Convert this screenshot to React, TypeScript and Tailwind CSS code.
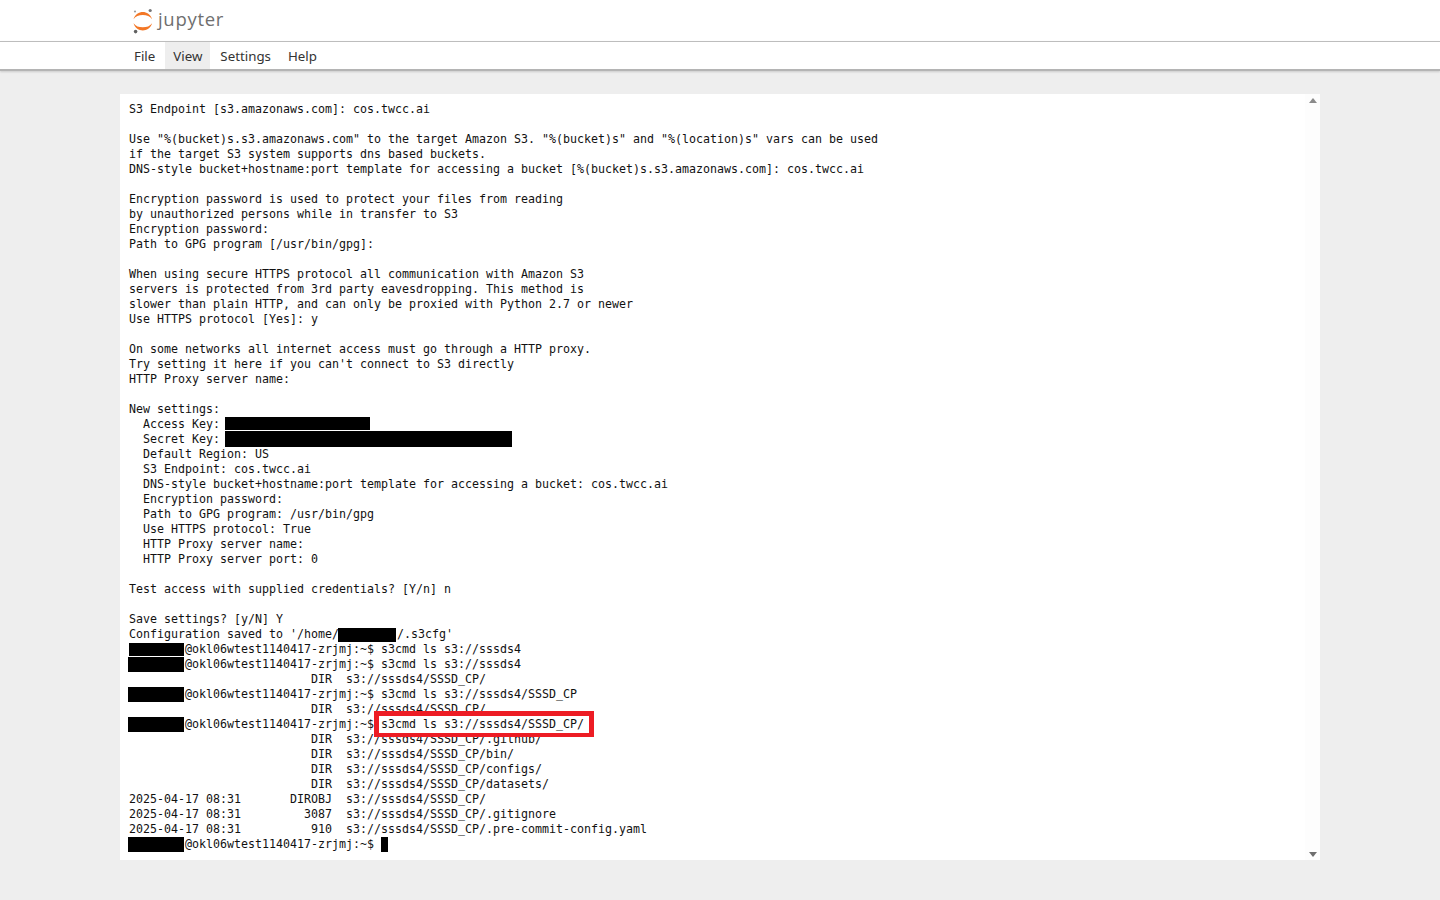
import type { ReactNode } from 'react'

function Tapa({ className }: { className: string }) {
  return <span className={`inline-block bg-black align-top ${className}`} />
}

const prompt = <Tapa className="-ml-[1px] mr-[1px] h-[15px] w-[56px]" />
const dir = (p: string) => ' '.repeat(26) + 'DIR  s3://sssds4/' + p

// cada línea del terminal: texto o fragmentos con barras tapadas
const lineas: ReactNode[] = [
  'S3 Endpoint [s3.amazonaws.com]: cos.twcc.ai',
  '',
  'Use "%(bucket)s.s3.amazonaws.com" to the target Amazon S3. "%(bucket)s" and "%(location)s" vars can be used',
  'if the target S3 system supports dns based buckets.',
  'DNS-style bucket+hostname:port template for accessing a bucket [%(bucket)s.s3.amazonaws.com]: cos.twcc.ai',
  '',
  'Encryption password is used to protect your files from reading',
  'by unauthorized persons while in transfer to S3',
  'Encryption password:',
  'Path to GPG program [/usr/bin/gpg]:',
  '',
  'When using secure HTTPS protocol all communication with Amazon S3',
  'servers is protected from 3rd party eavesdropping. This method is',
  'slower than plain HTTP, and can only be proxied with Python 2.7 or newer',
  'Use HTTPS protocol [Yes]: y',
  '',
  'On some networks all internet access must go through a HTTP proxy.',
  "Try setting it here if you can't connect to S3 directly",
  'HTTP Proxy server name:',
  '',
  'New settings:',
  <>  Access Key: <Tapa className="-ml-[2px] h-[13px] w-[145px]" /></>,
  <>  Secret Key: <Tapa className="-ml-[2px] -mt-[1px] h-[16px] w-[287px]" /></>,
  '  Default Region: US',
  '  S3 Endpoint: cos.twcc.ai',
  '  DNS-style bucket+hostname:port template for accessing a bucket: cos.twcc.ai',
  '  Encryption password:',
  '  Path to GPG program: /usr/bin/gpg',
  '  Use HTTPS protocol: True',
  '  HTTP Proxy server name:',
  '  HTTP Proxy server port: 0',
  '',
  'Test access with supplied credentials? [Y/n] n',
  '',
  'Save settings? [y/N] Y',
  <>Configuration saved to '/home/<Tapa className="-ml-[1px] mr-[1px] mt-[1px] h-[14px] w-[58px]" />/.s3cfg'</>,
  <><Tapa className="mr-[1px] mt-[1px] h-[13px] w-[55px]" />@okl06wtest1140417-zrjmj:~$ s3cmd ls s3://sssds4</>,
  <>{prompt}@okl06wtest1140417-zrjmj:~$ s3cmd ls s3://sssds4</>,
  dir('SSSD_CP/'),
  <>{prompt}@okl06wtest1140417-zrjmj:~$ s3cmd ls s3://sssds4/SSSD_CP</>,
  dir('SSSD_CP/'),
  <>{prompt}@okl06wtest1140417-zrjmj:~$ s3cmd ls s3://sssds4/SSSD_CP/</>,
  dir('SSSD_CP/.github/'),
  dir('SSSD_CP/bin/'),
  dir('SSSD_CP/configs/'),
  dir('SSSD_CP/datasets/'),
  '2025-04-17 08:31       DIROBJ  s3://sssds4/SSSD_CP/',
  '2025-04-17 08:31         3087  s3://sssds4/SSSD_CP/.gitignore',
  '2025-04-17 08:31          910  s3://sssds4/SSSD_CP/.pre-commit-config.yaml',
  <>{prompt}@okl06wtest1140417-zrjmj:~$ <Tapa className="h-[15px] w-[7px]" /></>,
]

function JupyterLogo() {
  return (
    <svg width="22" height="26" viewBox="0 0 22 26" className="shrink-0">
      <path d="M1.5 11.2C3 6.2 7 4 10.8 4s7.8 2.2 9.3 7.2C18 8.3 14.8 7.1 10.8 7.1S3.6 8.3 1.5 11.2Z" fill="#f37726" />
      <path d="M1.5 15.2C3 20.2 7 22.4 10.8 22.4s7.8-2.2 9.3-7.2c-2.1 2.9-5.3 4.1-9.3 4.1S3.6 18.1 1.5 15.2Z" fill="#f37726" />
      <circle cx="18.2" cy="2.5" r="1.6" fill="#767677" />
      <circle cx="3" cy="3.5" r="1.1" fill="#9e9e9e" />
      <circle cx="3.6" cy="23.6" r="1.8" fill="#616262" />
    </svg>
  )
}

export default function App() {
  return (
    <div className="flex h-screen flex-col overflow-hidden bg-[#eeeeee] font-['Noto_Sans',sans-serif]">
      <header className="flex h-[41px] shrink-0 items-center gap-[4px] bg-white pl-[132px]">
        <JupyterLogo />
        <span className="-mt-[3px] text-[18.5px] leading-none tracking-[0.7px] text-[#6f6f6f] font-['Open_Sans',sans-serif]">jupyter</span>
      </header>
      <nav className="flex h-[30px] shrink-0 border-t border-b-2 border-t-[#bdbdbd] border-b-[#b4b4b4] bg-white pl-[125px] text-[13.3px] text-[#333333] shadow-[0_1px_2px_rgba(0,0,0,0.15)]">
        <span className="flex items-center pl-[9px] pr-[10px] pt-[2px]">File</span>
        <span className="flex items-center bg-[#eeeeee] px-[8px] pt-[2px]">View</span>
        <span className="flex items-center pl-[10px] pr-[8px] pt-[2px]">Settings</span>
        <span className="flex items-center px-[9px] pt-[2px]">Help</span>
      </nav>
      <main className="mx-[120px] mt-[23px] flex h-[766px] shrink-0 bg-white">
        <div className="relative flex-1 pl-[9px] pt-[8px] font-['DejaVu_Sans_Mono',monospace] text-[11.64px] leading-[15px] text-[#111111]">
          {lineas.map((l, i) => (
            <div key={i} className="h-[15px] whitespace-pre">{l}</div>
          ))}
          <div className="absolute left-[254px] top-[617px] h-[26px] w-[220px] border-[5px] border-b-[4px] border-[#ed1c24]" />
        </div>
        <div className="flex w-[15px] shrink-0 flex-col items-center justify-between bg-[#fdfdfd] pb-[3px] pt-[4px]">
          <svg width="8" height="5" viewBox="0 0 8 5"><path d="M4 0 8 5H0Z" fill="#8a8a8a" /></svg>
          <svg width="8" height="5" viewBox="0 0 8 5"><path d="M0 0H8L4 5Z" fill="#6e6e6e" /></svg>
        </div>
      </main>
    </div>
  )
}
